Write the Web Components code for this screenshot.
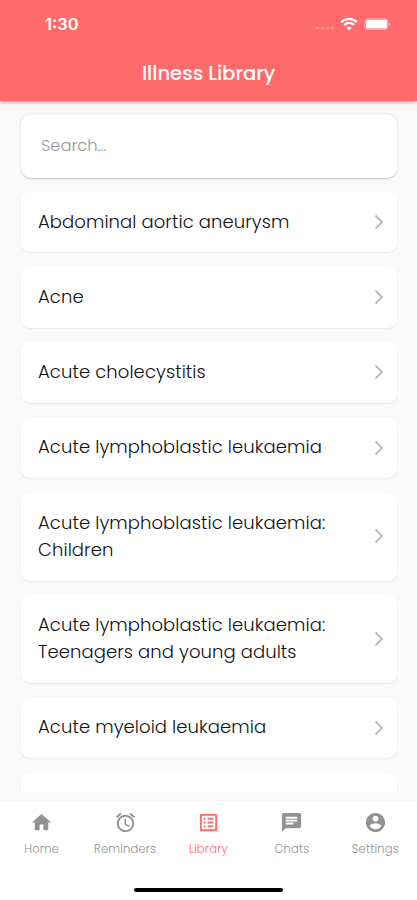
<!DOCTYPE html>
<html lang="en">
<head>
<meta charset="utf-8">
<meta name="viewport" content="width=device-width, initial-scale=1">
<title>Illness Library</title>
<style>
  html, body {
    margin: 0;
    height: 100%;
    overflow: hidden;
    background: #fafafa;
    font-family: Poppins, Inter, "Liberation Sans", sans-serif;
  }
</style>
</head>
<body>
<library-screen>
  <status-bar slot="header" time="1:30"></status-bar>
  <title-bar slot="header">Illness Library</title-bar>

  <search-box placeholder="Search..."></search-box>
  <illness-row>Abdominal aortic aneurysm</illness-row>
  <illness-row>Acne</illness-row>
  <illness-row>Acute cholecystitis</illness-row>
  <illness-row>Acute lymphoblastic leukaemia</illness-row>
  <illness-row>Acute lymphoblastic leukaemia:<br>Children</illness-row>
  <illness-row>Acute lymphoblastic leukaemia:<br>Teenagers and young adults</illness-row>
  <illness-row>Acute myeloid leukaemia</illness-row>
  <illness-row></illness-row>

  <tab-bar slot="footer">
    <tab-item icon="home">Home</tab-item>
    <tab-item icon="alarm">Reminders</tab-item>
    <tab-item icon="list" active>Library</tab-item>
    <tab-item icon="chat">Chats</tab-item>
    <tab-item icon="account">Settings</tab-item>
  </tab-bar>
</library-screen>

<script>
// Page frame: header, clipped list, footer
class LibraryScreen extends HTMLElement {
  constructor() {
    super();
    this.attachShadow({ mode: 'open' });
  }

  connectedCallback() {
    this.shadowRoot.innerHTML = `
      <style>
        :host {
          display: flex;
          flex-direction: column;
          height: 900px;
        }

        header {
          height: 100.5px;
          flex-shrink: 0;
          background: #ff6b6b;
          color: #fff;
          box-shadow: 0 1px 4px rgba(0, 0, 0, 0.42);
          z-index: 1;
        }

        main {
          height: 691.5px;
          box-sizing: border-box;
          padding: 13px 20.5px 0 21px;
          margin-bottom: 9px;
          flex-shrink: 0;
          overflow: hidden;
        }
      </style>

      <header><slot name="header"></slot></header>
      <main><slot></slot></main>
      <slot name="footer"></slot>
    `;
  }
}

class StatusBar extends HTMLElement {
  constructor() {
    super();
    this.attachShadow({ mode: 'open' });
  }

  connectedCallback() {
    this.shadowRoot.innerHTML = `
      <style>
        :host {
          display: flex;
          align-items: center;
          justify-content: space-between;
          height: 48px;
          padding: 0 26px 0 45px;
        }

        .time {
          font-family: Inter, sans-serif;
          font-size: 16.5px;
          font-weight: 600;
          letter-spacing: 0;
        }

        svg {
          display: block;
        }
      </style>

      <div class="time">${this.getAttribute('time')}</div>
      <svg width="76" height="16" viewBox="0 0 76 16" fill="#fff">
        <g opacity="0.3">
          <rect x="1" y="11" width="3.4" height="2.2" rx="1"/>
          <rect x="6" y="11" width="3.4" height="2.2" rx="1"/>
          <rect x="11" y="11" width="3.4" height="2.2" rx="1"/>
          <rect x="16" y="11" width="3.4" height="2.2" rx="1"/>
        </g>
        <g fill="none" stroke="#fff" stroke-width="2.3">
          <path d="M26.4 6.1a10.6 10.6 0 0 1 15.4 0"/>
          <path d="M29.200 9a6.800 6.800 0 0 1 9.800 0"/>
        </g>
        <path d="M34.100 14.500l-2.400-2.700a3.400 3.400 0 0 1 4.800 0z"/>
        <rect x="50" y="2.900" width="23" height="10.600" rx="3" fill="none" stroke="#fff" stroke-opacity="0.4"/>
        <rect x="51" y="3.800" width="21" height="8.800" rx="1.500"/>
        <path d="M74.200 6.400a2 2 0 0 1 0 3.600z" opacity="0.5"/>
      </svg>
    `;
  }
}

class TitleBar extends HTMLElement {
  constructor() {
    super();
    this.attachShadow({ mode: 'open' });
  }

  connectedCallback() {
    this.shadowRoot.innerHTML = `
      <style>
        :host {
          display: block;
          height: 50px;
          line-height: 51px;
          text-align: center;
          font-size: 19.6px;
          font-weight: 500;
          letter-spacing: 0;
        }
      </style>
      <slot></slot>
    `;
  }
}

class SearchBox extends HTMLElement {
  constructor() {
    super();
    this.attachShadow({ mode: 'open' });
  }

  connectedCallback() {
    this.shadowRoot.innerHTML = `
      <style>
        :host {
          display: flex;
          align-items: center;
          box-sizing: border-box;
          height: 64px;
          margin-bottom: 14px;
          padding: 0 20px;
          background: #fff;
          border-radius: 10px;
          box-shadow: 0 0.5px 2px rgba(0, 0, 0, 0.22);
          color: #999;
          font-size: 16.3px;
          font-weight: 300;
        }
      </style>
      <span>${this.getAttribute('placeholder')}</span>
    `;
  }
}

class IllnessRow extends HTMLElement {
  constructor() {
    super();
    this.attachShadow({ mode: 'open' });
  }

  connectedCallback() {
    this.shadowRoot.innerHTML = `
      <style>
        :host {
          display: flex;
          align-items: center;
          justify-content: space-between;
          box-sizing: border-box;
          min-height: 60.95px;
          margin-bottom: 14.3px;
          padding: 16px 12px 17.8px 17px;
          background: #fff;
          border-radius: 9px;
          box-shadow: 0 1px 2px rgba(0, 0, 0, 0.08);
          color: #111;
          font-size: 18px;
          font-weight: 300;
          line-height: 27.15px;
          white-space: nowrap;
          letter-spacing: 0.08px;
        }

        svg {
          flex-shrink: 0;
          margin-top: 1.5px;
        }
      </style>
      <div><slot></slot></div>
      <svg width="12" height="18" viewBox="0 0 12 18" fill="none" stroke="#b8b8b8" stroke-width="1.8">
        <path d="M2.5 2.500L9 9l-6.500 6.500"/>
      </svg>
    `;
  }
}

class TabBar extends HTMLElement {
  constructor() {
    super();
    this.attachShadow({ mode: 'open' });
  }

  connectedCallback() {
    this.shadowRoot.innerHTML = `
      <style>
        :host {
          display: flex;
          flex-direction: column;
          align-items: center;
          flex: 1;
          background: #fff;
          box-shadow: 0 -1px 1px rgba(0, 0, 0, 0.02);
        }

        nav {
          display: grid;
          grid-template-columns: repeat(5, 1fr);
          width: 100%;
          height: 87px;
        }

        .indicator {
          width: 149px;
          height: 4.2px;
          border-radius: 3px;
          background: #000;
        }
      </style>
      <nav><slot></slot></nav>
      <div class="indicator"></div>
    `;
  }
}

const ICONS = {
  home: '<path d="M10 20v-6h4v6h5v-8h3L12 3 2 12h3v8z"/>',
  alarm: '<path d="M22 5.72l-4.6-3.86-1.29 1.53 4.6 3.86L22 5.72zM7.88 3.39L6.6 1.86 2 5.71l1.29 1.53 4.59-3.85zM12.5 8H11v6l4.75 2.85.75-1.23-4-2.37V8zM12 4c-4.97 0-9 4.03-9 9s4.02 9 9 9a9 9 0 0 0 0-18zm0 16c-3.87 0-7-3.13-7-7s3.13-7 7-7 7 3.13 7 7-3.13 7-7 7z"/>',
  list: '<path d="M19 5v14H5V5h14m1.1-2H3.9c-.5 0-.9.4-.9.9v16.2c0 .4.4.9.9.9h16.2c.4 0 .9-.5.9-.9V3.9c0-.5-.5-.9-.9-.9zM11 7h6v2h-6V7zm0 4h6v2h-6v-2zm0 4h6v2h-6zM7 7h2v2H7zm0 4h2v2H7zm0 4h2v2H7z"/>',
  chat: '<path d="M20 2H4c-1.1 0-1.99.9-1.99 2L2 22l4-4h14c1.1 0 2-.9 2-2V4c0-1.1-.9-2-2-2zM6 9h12v2H6V9zm8 5H6v-2h8v2zm4-6H6V6h12v2z"/>',
  account: '<path d="M12 2C6.48 2 2 6.48 2 12s4.48 10 10 10 10-4.48 10-10S17.52 2 12 2zm0 3c1.66 0 3 1.34 3 3s-1.34 3-3 3-3-1.34-3-3 1.34-3 3-3zm0 14.2c-2.5 0-4.71-1.28-6-3.22.03-1.99 4-3.08 6-3.08 1.99 0 5.97 1.09 6 3.08-1.29 1.94-3.5 3.22-6 3.22z"/>'
};

class TabItem extends HTMLElement {
  constructor() {
    super();
    this.attachShadow({ mode: 'open' });
  }

  connectedCallback() {
    this.shadowRoot.innerHTML = `
      <style>
        :host {
          display: flex;
          flex-direction: column;
          align-items: center;
          gap: 7px;
          padding-top: 9.5px;
          color: #929292;
          font-size: 11.5px;
          font-weight: 300;
          line-height: 16px;
          letter-spacing: 0.2px;
        }

        :host([active]) {
          color: #ff6b6b;
        }
      </style>
      <svg width="23" height="23" viewBox="0 0 24 24" fill="currentColor">
        ${ICONS[this.getAttribute('icon')]}
      </svg>
      <span><slot></slot></span>
    `;
  }
}

customElements.define('library-screen', LibraryScreen);
customElements.define('status-bar', StatusBar);
customElements.define('title-bar', TitleBar);
customElements.define('search-box', SearchBox);
customElements.define('illness-row', IllnessRow);
customElements.define('tab-bar', TabBar);
customElements.define('tab-item', TabItem);
</script>
</body>
</html>
